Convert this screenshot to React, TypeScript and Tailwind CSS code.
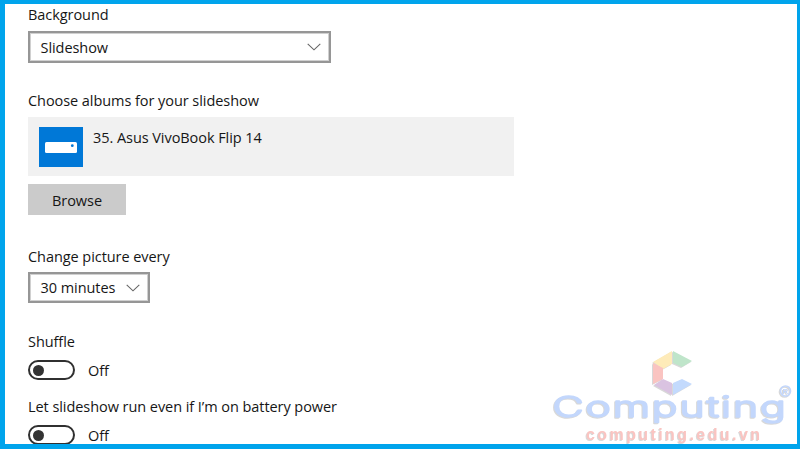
import type { ReactNode } from 'react';

function Label({ children, className = '' }: { children: ReactNode; className?: string }) {
  return <div className={`h-5 w-fit leading-5 tracking-[-0.06px] whitespace-nowrap ${className}`}>{children}</div>;
}

function Chevron() {
  return (
    <svg width="14" height="8" viewBox="0 0 14 8" fill="none" stroke="#666" strokeWidth="1.1">
      <path d="M.7 .8 7 6.8 13.3 .8" />
    </svg>
  );
}

function Select({ children, className }: { children: ReactNode; className: string }) {
  return (
    <div
      className={`flex items-center justify-between border-2 border-[#969696] pr-2 pl-[10.5px] inset-shadow-[0_0_0_1px_#d0d0d0] ${className}`}
    >
      <Label className="mt-px">{children}</Label>
      <Chevron />
    </div>
  );
}

function Toggle() {
  return (
    <div className="flex h-5 items-center">
      <div className="flex h-5 w-[47px] shrink-0 items-center rounded-full border-2 border-[#303030] pl-[3px]">
        <div className="size-[11px] rounded-full bg-[#333]" />
      </div>
      <Label className="mt-0.5 ml-[13px]">Off</Label>
    </div>
  );
}

function Watermark() {
  return (
    <svg
      className="absolute top-[345px] left-[545px]"
      width="252"
      height="99"
      viewBox="545 345 252 99"
      style={{ filter: 'drop-shadow(-1px 1px 0.4px rgba(90,90,90,.24))' }}
    >
      <path d="M653 362 672 351V364L663 369Z" fill="#feebb9" />
      <path d="M673 351 692 361 682 367 673 363Z" fill="#bfe5ca" />
      <path d="M653 363 663 368V379L653 384Z" fill="#fac4c1" />
      <path d="M654 385 663 379 672 383V395Z" fill="#dac3e1" />
      <path d="M673 383 682 379 692 384 673 395Z" fill="#c3dafd" />
      <text
        x="552.5"
        y="416.5"
        fontFamily="Inter, 'Liberation Sans', sans-serif"
        fontSize="28"
        fontWeight="300"
        letterSpacing="1.2"
        fill="#c3d7fc"
        stroke="#c3d7fc"
        strokeWidth="1.5"
        strokeLinejoin="round"
        textLength="235"
        lengthAdjust="spacingAndGlyphs"
      >
        Computing
      </text>
      <circle cx="785.5" cy="391" r="5" fill="none" stroke="#c3d7fc" strokeWidth="1.7" />
      <text x="782.6" y="394" fontFamily="Liberation Sans, sans-serif" fontSize="8" fontWeight="700" fill="#c3d7fc">
        R
      </text>
      <text
        x="586"
        y="440"
        fontFamily="Liberation Sans, sans-serif"
        fontSize="16"
        fontWeight="700"
        fill="#fac4c1"
        textLength="174"
      >
        computing.edu.vn
      </text>
    </svg>
  );
}

export default function App() {
  return (
    <div className="h-[450px] w-[800px] overflow-hidden bg-white">
      <main className="relative h-[449px] overflow-hidden border-t-4 border-r-[3px] border-b-[5px] border-l-[5px] border-[#00a4ec] bg-white pl-[23px] font-['Open_Sans','Noto_Sans',sans-serif] text-[14.5px] text-[#161616]">
        <Label className="mt-px">Background</Label>
        <Select className="mt-[6px] h-8 w-[303px]">Slideshow</Select>
        <Label className="mt-7">Choose albums for your slideshow</Label>
        <div className="mt-[6px] flex h-[59px] w-[486px] bg-[#f1f1f1] pt-[10px] pl-[11px]">
          <div className="flex h-10 w-[44px] items-center justify-center bg-[#0078d7]">
            <svg width="32" height="11" viewBox="0 0 32 11">
              <rect width="32" height="11" rx="1.5" fill="#fff" />
              <circle cx="27.3" cy="3.7" r="1.4" fill="#0078d7" />
            </svg>
          </div>
          <Label className="mt-px ml-[10px]">35. Asus VivoBook Flip 14</Label>
        </div>
        <button className="mt-2 flex h-[31px] w-[98px] items-center justify-center bg-[#cbcbcb]">
          <Label className="mt-0.5">Browse</Label>
        </button>
        <Label className="mt-8">Change picture every</Label>
        <Select className="mt-[5px] h-[31px] w-[122px]">30 minutes</Select>
        <Label className="mt-[29px] mb-[8px]">Shuffle</Label>
        <Toggle />
        <Label className="mt-[17px] mb-[8px]">Let slideshow run even if I’m on battery power</Label>
        <Toggle />
      </main>
      <Watermark />
    </div>
  );
}
